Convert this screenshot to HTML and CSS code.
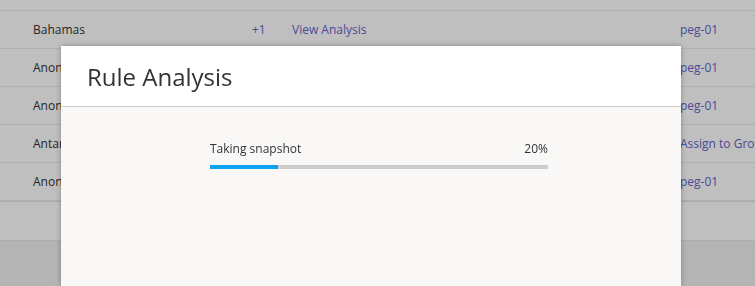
FILE: index.html
```html
<!DOCTYPE html>
<html lang="en">

<head>
    <meta charset="UTF-8">
    <meta name="viewport" content="width=device-width, initial-scale=1.0">
    <title>Rule Analysis</title>
    <link rel="stylesheet" href="styles.css">
</head>

<body>
    <div class="page">
        <div class="table">
            <div class="row top"></div>
            <div class="row">
                <span class="name">Bahamas</span>
                <span class="count">+1</span>
                <a class="link analysis">View Analysis</a>
                <a class="link owner">peg-01</a>
            </div>
            <div class="row">
                <span class="name">Anonymous</span>
                <span class="count"></span>
                <a class="link analysis"></a>
                <a class="link owner">peg-01</a>
            </div>
            <div class="row">
                <span class="name">Anonymous</span>
                <span class="count"></span>
                <a class="link analysis"></a>
                <a class="link owner">peg-01</a>
            </div>
            <div class="row">
                <span class="name">Antarctica</span>
                <span class="count"></span>
                <a class="link analysis"></a>
                <a class="link owner">Assign to Group</a>
            </div>
            <div class="row">
                <span class="name">Anonymous</span>
                <span class="count"></span>
                <a class="link analysis"></a>
                <a class="link owner">peg-01</a>
            </div>
            <div class="footer"></div>
        </div>
    </div>

    <div class="overlay"></div>

    <div class="modal">
        <div class="modal-head">
            <h2>Rule Analysis</h2>
        </div>
        <div class="modal-body">
            <div class="progress">
                <div class="progress-label">
                    <span>Taking snapshot</span>
                    <span>20%</span>
                </div>
                <div class="bar">
                    <div class="fill" style="width: 20%"></div>
                </div>
            </div>
        </div>
    </div>
</body>

</html>
```

FILE: styles.css
```css
* {
    margin: 0;
    padding: 0;
    box-sizing: border-box;
    font-family: "Open Sans", Arial, sans-serif;
}

body {
    height: 100vh;
    width: 100%;
    overflow: hidden;
    background-color: #f1f1f1;
}

.table {
    background-color: #fff;
}

.row {
    height: 38px;
    display: flex;
    align-items: center;
    font-size: 12px;
    color: #333;
    border-bottom: 1px solid #ebebeb;
}

.row.top {
    height: 11px;
}

.name,
.count,
.analysis {
    flex-shrink: 0;
}

.name {
    width: 252px;
    padding-left: 33px;
    white-space: nowrap;
}

.count {
    width: 40px;
    color: #6464c8;
}

.link {
    color: #6464c8;
    white-space: nowrap;
}

.analysis {
    width: 388px;
}

.footer {
    height: 40px;
    border-top: 1px solid #e0e0e0;
    border-bottom: 1px solid #e6e6e6;
    background-color: #fff;
}

.overlay {
    position: fixed;
    inset: 0;
    background-color: rgba(0, 0, 0, 0.25);
}

.modal {
    position: absolute;
    left: 61px;
    top: 46px;
    width: 620px;
    height: 240px;
    background-color: #f9f8f6;
    box-shadow: 0 0 5px rgba(0, 0, 0, 0.3);
}

.modal-head {
    height: 61px;
    background-color: #fff;
    border-bottom: 1px solid #cccccc;
    padding-left: 26px;
    display: flex;
    align-items: center;
}

.modal-head h2 {
    font-size: 24px;
    font-weight: normal;
    color: #333;
}

.modal-body {
    padding: 33px 0 0 149px;
}

.progress {
    width: 338px;
}

.progress-label {
    display: flex;
    justify-content: space-between;
    font-size: 12px;
    line-height: 17px;
    color: #333;
    margin-bottom: 8px;
}

.bar {
    height: 4px;
    background-color: #cccccc;
}

.fill {
    height: 100%;
    background-color: #0ba2f0;
}
```
